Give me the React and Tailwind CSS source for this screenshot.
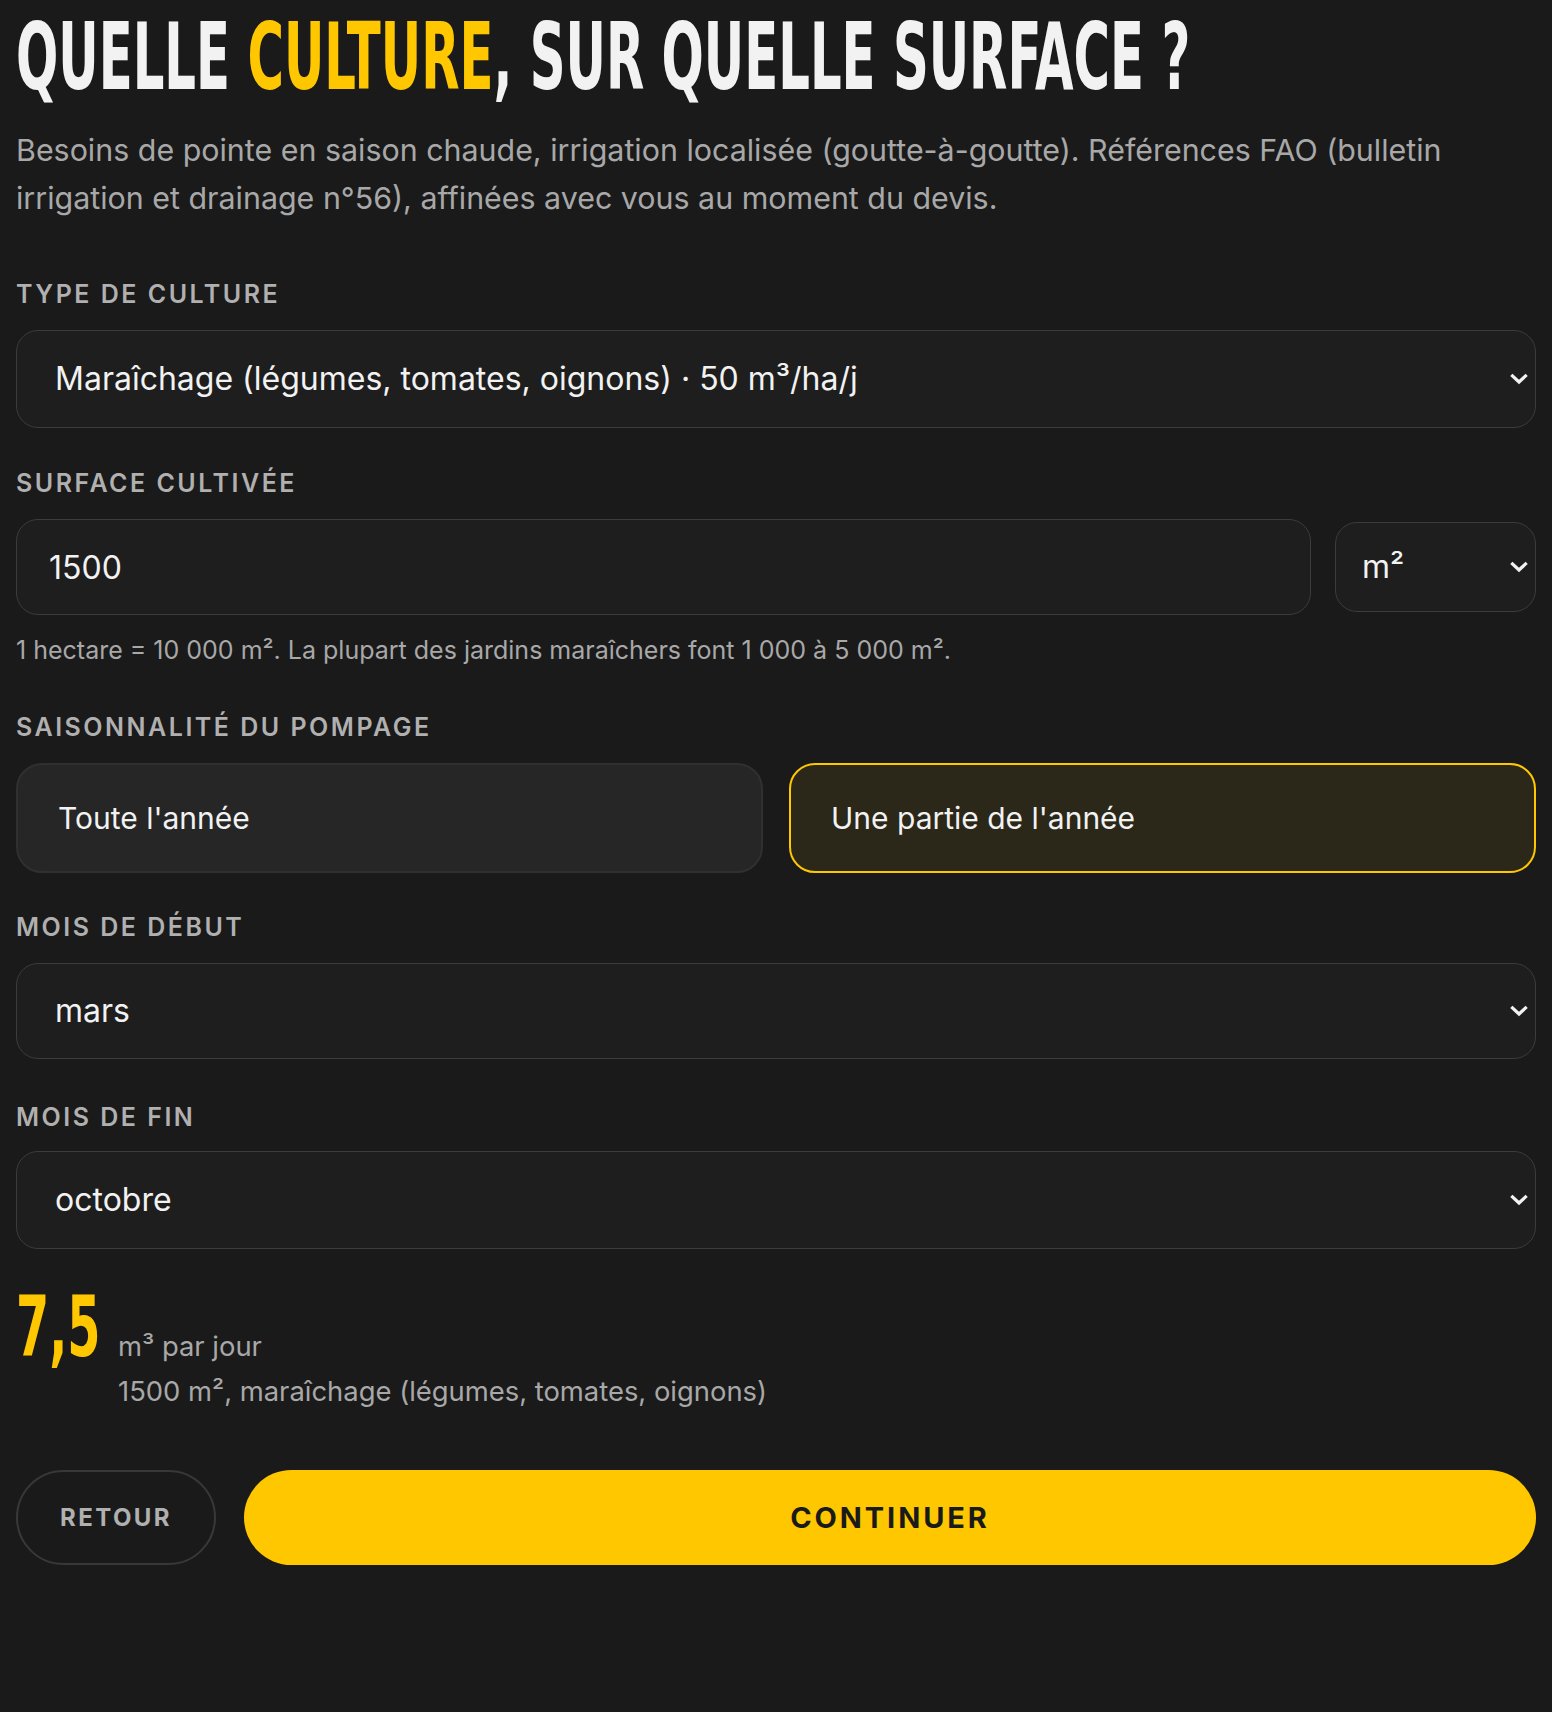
import React, { useState } from 'react';

const display = "font-['DejaVu_Sans_Condensed','Liberation_Sans_Narrow',sans-serif] font-bold";
const body = "font-['Inter','Noto_Sans',sans-serif]";

function Chevron() {
  return (
    <svg
      className="pointer-events-none absolute right-[7px] top-1/2 h-[20px] w-[20px] -translate-y-1/2"
      viewBox="0 0 20 20"
      fill="none"
    >
      <path d="M3.5 7 10 13l6.5-6" stroke="#f2f2f2" strokeWidth="3.2" strokeLinecap="square" />
    </svg>
  );
}

function Label({ children, mb = 'mb-5' }) {
  return (
    <div className={`${mb} text-[25px] font-semibold uppercase leading-[32px] tracking-[0.1em] text-[#b0b0b0]`}>
      {children}
    </div>
  );
}

function Select({ value, options, onChange, className = '', pad = 'pl-[38px]' }) {
  return (
    <div className={`relative ${className}`}>
      <select
        value={value}
        onChange={(e) => onChange(e.target.value)}
        className={`h-full w-full appearance-none rounded-[22px] border border-[#3c3c3c] bg-[#1e1e1e] ${pad} pr-12 text-[32px] text-[#f2f2f2] focus:outline-none`}
      >
        {options.map((o) => (
          <option key={o} value={o}>
            {o}
          </option>
        ))}
      </select>
      <Chevron />
    </div>
  );
}

const months = ['janvier', 'février', 'mars', 'avril', 'mai', 'juin', 'juillet', 'août', 'septembre', 'octobre', 'novembre', 'décembre'];

export default function App() {
  const [culture, setCulture] = useState('Maraîchage (légumes, tomates, oignons) · 50 m³/ha/j');
  const [surface, setSurface] = useState('1500');
  const [unit, setUnit] = useState('m²');
  const [season, setSeason] = useState('part');
  const [start, setStart] = useState('mars');
  const [end, setEnd] = useState('octobre');

  return (
    <div className={`min-h-[1712px] w-full bg-[#1a1a1a] px-4 ${body}`}>
      <h1 className={`h-[126px] pt-3 text-[55.3px] leading-none text-[#f2f2f2] ${display}`}>
        <span className="inline-block origin-top-left scale-y-[1.68] whitespace-nowrap">
          QUELLE <span className="text-[#ffc700]">CULTURE</span>, SUR QUELLE SURFACE ?
        </span>
      </h1>

      <p className="text-[30.4px] leading-[48px] text-[#a8a8a8]">
        Besoins de pointe en saison chaude, irrigation localisée (goutte-à-goutte). Références FAO (bulletin
        irrigation et drainage n°56), affinées avec vous au moment du devis.
      </p>

      <div className="mt-14">
        <Label>Type de culture</Label>
        <Select
          className="h-[98px]"
          value={culture}
          onChange={setCulture}
          options={[
            'Maraîchage (légumes, tomates, oignons) · 50 m³/ha/j',
            'Arboriculture (vergers) · 40 m³/ha/j',
            'Céréales (maïs, blé) · 60 m³/ha/j',
          ]}
        />
      </div>

      <div className="mt-[39px]">
        <Label>Surface cultivée</Label>
        <div className="flex items-center gap-6">
          <input
            type="text"
            value={surface}
            onChange={(e) => setSurface(e.target.value)}
            className="h-[96px] min-w-0 flex-1 rounded-[22px] border border-[#3c3c3c] bg-[#1e1e1e] pl-8 text-[32px] text-[#f2f2f2] focus:outline-none"
          />
          <Select
            className="h-[90px] w-[201px]"
            pad="pl-[26px]"
            value={unit}
            onChange={setUnit}
            options={['m²', 'ha']}
          />
        </div>
        <p className="mt-[19px] text-[25px] leading-[32px] text-[#a8a8a8]">
          1 hectare = 10 000 m². La plupart des jardins maraîchers font 1 000 à 5 000 m².
        </p>
      </div>

      <div className="mt-[45px]">
        <Label>Saisonnalité du pompage</Label>
        <div className="grid grid-cols-2 gap-[26px]">
          <button
            onClick={() => setSeason('all')}
            className={`h-[110px] rounded-[26px] border-2 pl-10 text-left text-[30px] text-[#f2f2f2] ${
              season === 'all' ? 'border-[#ffc700] bg-[#2b2719]' : 'border-[#303030] bg-[#262626]'
            }`}
          >
            Toute l'année
          </button>
          <button
            onClick={() => setSeason('part')}
            className={`h-[110px] rounded-[26px] border-2 pl-10 text-left text-[30px] text-[#f2f2f2] ${
              season === 'part' ? 'border-[#ffc700] bg-[#2b2719]' : 'border-[#303030] bg-[#262626]'
            }`}
          >
            Une partie de l'année
          </button>
        </div>
      </div>

      <div className="mt-[38px]">
        <Label>Mois de début</Label>
        <Select className="h-[96px]" value={start} onChange={setStart} options={months} />
      </div>

      <div className="mt-[42px]">
        <Label mb="mb-[18px]">Mois de fin</Label>
        <Select className="h-[98px]" value={end} onChange={setEnd} options={months} />
      </div>

      <div className="mt-9 flex gap-5">
        <div className={`h-[80px] w-[82px] whitespace-nowrap text-[53px] leading-none text-[#ffc700] ${display}`}>
          <span className="inline-block origin-top-left scale-y-[1.58]">7,5</span>
        </div>
        <div className="pt-[39px] text-[27.4px] leading-[45px] text-[#a8a8a8]">
          <div>m³ par jour</div>
          <div>1500 m², maraîchage (légumes, tomates, oignons)</div>
        </div>
      </div>

      <div className="mt-[56px] flex gap-7">
        <button className="h-[95px] w-[200px] rounded-full border-2 border-[#383838] text-[24px] font-bold tracking-[0.1em] text-[#b0b0b0]">
          RETOUR
        </button>
        <button className="h-[95px] flex-1 rounded-full bg-[#ffc700] text-[29px] font-bold tracking-[0.1em] text-[#1a1a1a]">
          CONTINUER
        </button>
      </div>
    </div>
  );
}
